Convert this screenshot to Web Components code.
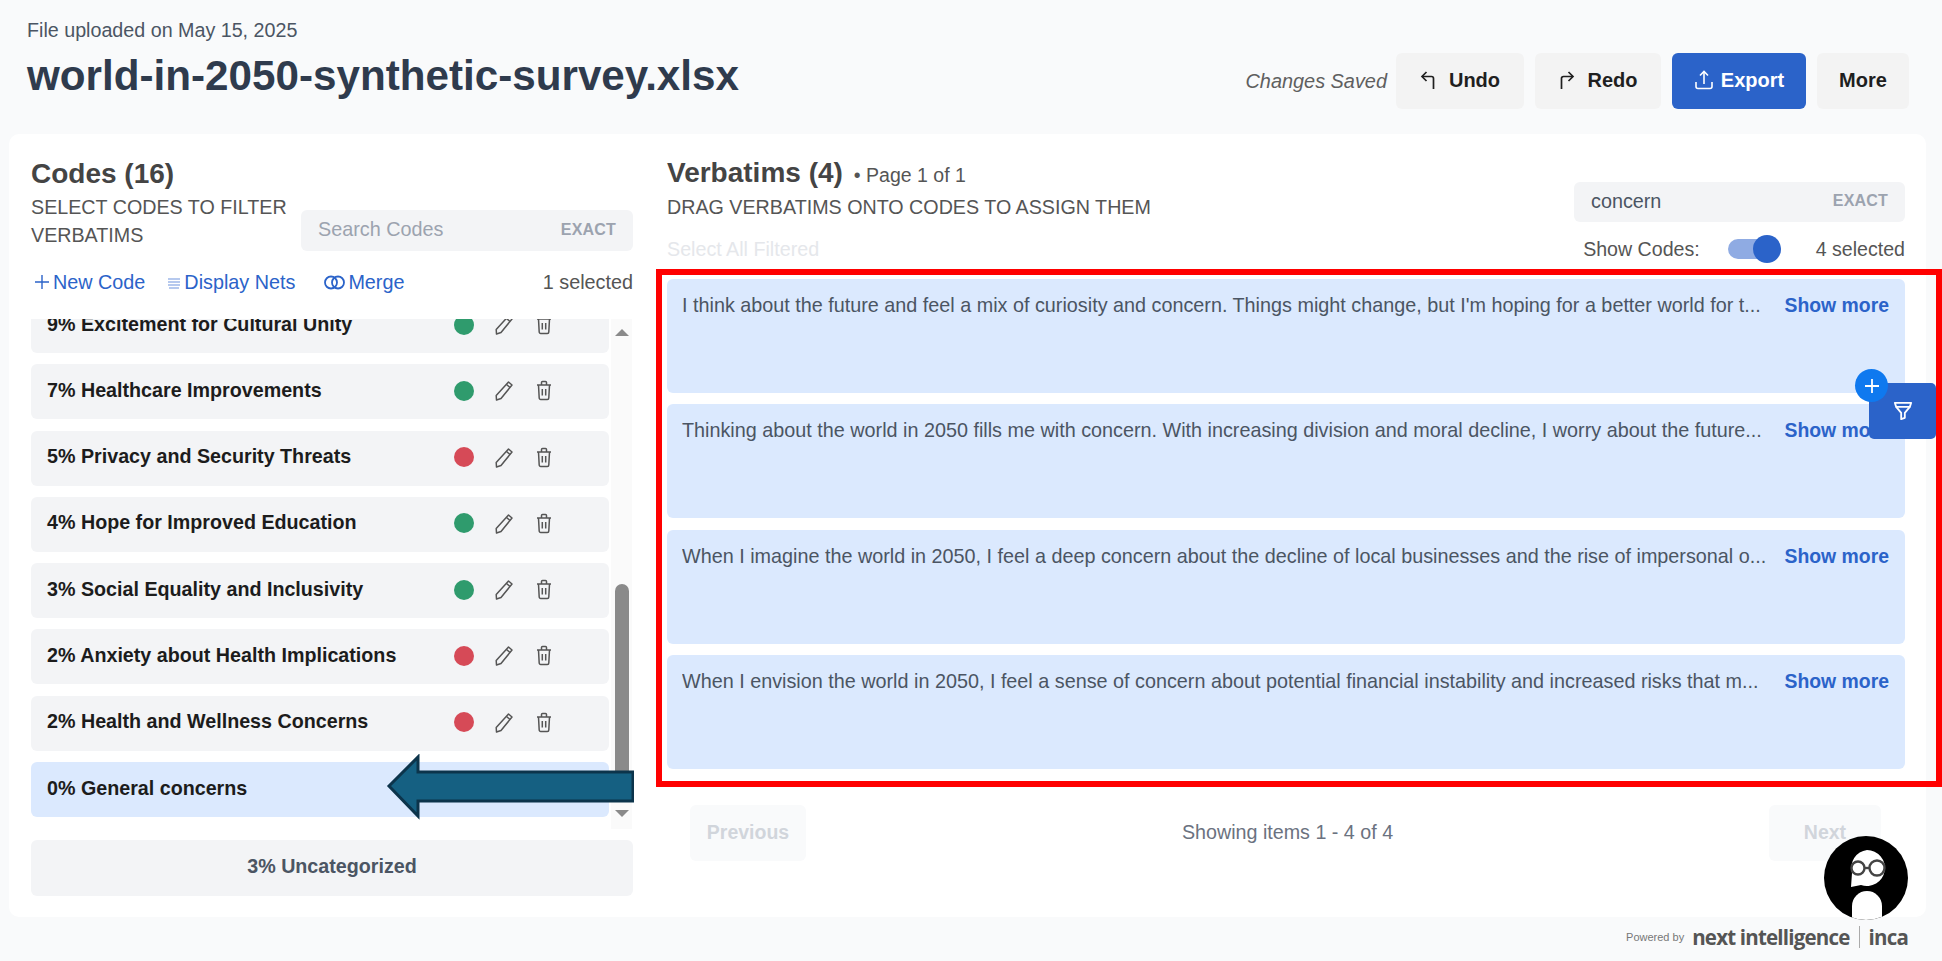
<!DOCTYPE html>
<html lang="en">
<head>
<meta charset="utf-8">
<title>world-in-2050-synthetic-survey.xlsx</title>
<style>
  html, body { margin: 0; height: 961px; overflow: hidden; background: #f9fafb; }
  body { font-family: "Liberation Sans", Arial, sans-serif; }
</style>
</head>
<body>
<coding-app></coding-app>

<script>
const ICONS = {
  undo: `<svg width="16" height="20" viewBox="0 0 16 20" fill="none" stroke="currentColor" stroke-width="1.7"><path d="M13.5 19V8.5a2 2 0 0 0-2-2H2.5"/><path d="M6.5 2 2 6.5 6.5 11"/></svg>`,
  redo: `<svg width="16" height="20" viewBox="0 0 16 20" fill="none" stroke="currentColor" stroke-width="1.7"><path d="M2.5 19V8.5a2 2 0 0 1 2-2h9"/><path d="M9.5 2 14 6.5 9.5 11"/></svg>`,
  upload: `<svg width="20" height="20" viewBox="0 0 20 20" fill="none" stroke="currentColor" stroke-width="1.6"><path d="M10 14V2"/><path d="M6 5.5 10 1.5l4 4"/><path d="M2 12v4.5a2 2 0 0 0 2 2h12a2 2 0 0 0 2-2V12"/></svg>`,
  pencil: `<svg width="20" height="21" viewBox="0 0 20 21" fill="none" stroke="#555" stroke-width="1.5" stroke-linejoin="round"><path d="M14.5 2 18 5 7 18.500 2.500 20 2.200 15.500Z"/><path d="M12.500 4.500 16 7.500"/></svg>`,
  trash: `<svg width="16" height="21" viewBox="0 0 16 21" fill="none" stroke="#555" stroke-width="1.5" stroke-linejoin="round"><path d="M1 5h14"/><path d="M5.500 5V2.500a1 1 0 0 1 1-1h3a1 1 0 0 1 1 1V5"/><path d="M2.500 5l.7 13a1.500 1.500 0 0 0 1.500 1.500h6.600a1.500 1.500 0 0 0 1.500-1.500l.7-13"/><path d="M6.300 9v6.500M9.700 9v6.500"/></svg>`,
  plus: `<svg width="14" height="14" viewBox="0 0 14 14" fill="none" stroke="currentColor" stroke-width="1.4"><path d="M7 0v14M0 7h14"/></svg>`,
  lines: `<svg width="14" height="14" viewBox="0 0 14 14" fill="none" stroke="#6f93dd" stroke-width="1.200"><path d="M1 4h12M1 7h12M1 10h12M2 13h10"/></svg>`,
  rings: `<svg width="24" height="16" viewBox="0 0 24 16" fill="none" stroke="currentColor" stroke-width="1.800"><circle cx="8" cy="8.500" r="6"/><circle cx="15" cy="8.500" r="6"/></svg>`,
  funnel: `<svg width="20" height="20" viewBox="0 0 22 22" fill="none" stroke="#fff" stroke-width="2" stroke-linejoin="round"><path d="M2 2h18l-1.500 4.500h-15Z"/><path d="M3.500 6.500 9 13v7l4-1.500V13l5.500-6.500"/></svg>`,
};

class CodingApp extends HTMLElement {
  constructor() {
    super();
    this.attachShadow({ mode: "open" });
  }

  connectedCallback() {
    this.shadowRoot.innerHTML = `
      <style>
        :host {
          display: flex;
          flex-direction: column;
          position: relative;
          width: 1942px;
          height: 961px;
          overflow: hidden;
          background: #f9fafb;
        }
        .panel {
          display: grid;
          grid-template-columns: 602px 1238px;
          column-gap: 34px;
          width: 1917px;
          height: 783px;
          box-sizing: border-box;
          margin-left: 9px;
          padding: 25px 21px 0 22px;
          background: #fff;
          border-radius: 10px;
        }
        /* annotation drawn on top of the screenshot */
        .redbox {
          position: absolute;
          left: 656px;
          top: 269px;
          width: 1286px;
          height: 518px;
          box-sizing: border-box;
          border: 6px solid #ff0000;
          pointer-events: none;
        }
        .arrow { position: absolute; left: 386px; top: 754px; }
        .filter {
          position: absolute;
          left: 1869px;
          top: 383px;
          width: 67px;
          height: 56px;
          display: flex;
          align-items: center;
          justify-content: center;
          background: #2b63c9;
          border-radius: 5px;
        }
        .fab {
          position: absolute;
          left: 1855px;
          top: 369px;
          width: 33px;
          height: 33px;
          border-radius: 50%;
          display: flex;
          align-items: center;
          justify-content: center;
          background: #0f79ef;
          color: #fff;
        }
        .avatar { position: absolute; left: 1824px; top: 836px; }
      </style>
      <page-header></page-header>
      <div class="panel">
        <codes-panel></codes-panel>
        <verbatims-panel></verbatims-panel>
      </div>
      <page-footer></page-footer>
      <div class="redbox"></div>
      <svg class="arrow" width="248" height="66" viewBox="0 0 248 66">
        <path d="M3 32 32 3V18H247V47H32V62Z" fill="#156082" stroke="#0c344b" stroke-width="3"/>
      </svg>
      <div class="filter">${ICONS.funnel}</div>
      <div class="fab"><svg width="16" height="16" viewBox="0 0 16 16" fill="none" stroke="#fff" stroke-width="1.8"><path d="M8 1v14M1 8h14"/></svg></div>
      <svg class="avatar" width="84" height="84" viewBox="0 0 84 84">
        <defs><clipPath id="c"><circle cx="42" cy="42" r="42"/></clipPath></defs>
        <circle cx="42" cy="42" r="42" fill="#000"/>
        <g clip-path="url(#c)">
          <path d="M43 14a18 18 0 1 1-6 35l-10 2 1-14a18 18 0 0 1 15-23Z" fill="#fff"/>
          <path d="M28 84V70a15 15 0 0 1 30 0v14Z" fill="#fff"/>
        </g>
        <g fill="none" stroke="#444" stroke-width="2.400">
          <circle cx="34" cy="32" r="6.500"/><circle cx="53" cy="32" r="7.500"/><path d="M40.500 32h5"/>
        </g>
      </svg>
    `;
  }
}

class PageHeader extends HTMLElement {
  constructor() {
    super();
    this.attachShadow({ mode: "open" });
  }

  connectedCallback() {
    this.shadowRoot.innerHTML = `
      <style>
        :host {
          display: flex;
          justify-content: space-between;
          height: 134px;
          box-sizing: border-box;
          padding: 17px 33px 0 27px;
          flex: none;
        }
        .uploaded { font-size: 19.700px; line-height: 26px; color: #4b5563; }
        h1 {
          margin: 8px 0 0;
          font-size: 42.200px;
          line-height: 50px;
          font-weight: 700;
          color: #2f3b4d;
        }
        .actions { display: flex; align-items: flex-start; padding-top: 36px; }
        .saved {
          font-style: italic;
          font-size: 19.900px;
          line-height: 56px;
          color: #5f5f5f;
          margin-right: 9px;
        }
        .btn {
          display: flex;
          align-items: center;
          justify-content: center;
          gap: 13px;
          height: 56px;
          margin-right: 11px;
          padding-bottom: 2px;
          box-sizing: border-box;
          font-size: 20px;
          font-weight: 700;
          color: #1f1f1f;
          background: #f3f3f3;
          border-radius: 6px;
        }
        .undo { width: 128px; }
        .redo { width: 126px; }
        .export { width: 134px; gap: 7px; background: #2b63c9; color: #fff; }
        .more { width: 92px; margin-right: 0; }
      </style>
      <div>
        <div class="uploaded">File uploaded on May 15, 2025</div>
        <h1>world-in-2050-synthetic-survey.xlsx</h1>
      </div>
      <div class="actions">
        <span class="saved">Changes Saved</span>
        <div class="btn undo">${ICONS.undo}<span>Undo</span></div>
        <div class="btn redo">${ICONS.redo}<span>Redo</span></div>
        <div class="btn export">${ICONS.upload}<span>Export</span></div>
        <div class="btn more">More</div>
      </div>
    `;
  }
}

class SearchBox extends HTMLElement {
  constructor() {
    super();
    this.attachShadow({ mode: "open" });
  }

  connectedCallback() {
    const value = this.getAttribute("value");
    const placeholder = this.getAttribute("placeholder");
    this.shadowRoot.innerHTML = `
      <style>
        :host {
          display: flex;
          align-items: center;
          justify-content: space-between;
          box-sizing: border-box;
          background: #f3f4f6;
          border-radius: 6px;
          padding: 0 17px 2px 17px;
          font-size: 19.800px;
        }
        .value { color: #4b5563; }
        .placeholder { color: #9ca3af; }
        .exact { font-size: 16px; font-weight: 700; color: #9ca3af; letter-spacing: .2px; }
      </style>
      <span class="${value ? "value" : "placeholder"}">${value || placeholder}</span>
      <span class="exact">EXACT</span>
    `;
  }
}

class CodeRow extends HTMLElement {
  constructor() {
    super();
    this.attachShadow({ mode: "open" });
  }

  connectedCallback() {
    const tone = this.getAttribute("tone");
    const controls = tone
      ? `<span class="dot ${tone}"></span><span class="pencil">${ICONS.pencil}</span><span class="trash">${ICONS.trash}</span>`
      : "";
    this.shadowRoot.innerHTML = `
      <style>
        :host {
          display: flex;
          align-items: center;
          flex: none;
          height: 55px;
          box-sizing: border-box;
          padding: 0 57px 3px 16px;
          background: #f3f4f6;
          border-radius: 6px;
          font-size: 19.700px;
          font-weight: 700;
          color: #1c1c1c;
        }
        :host([active]) { background: #dbe9fe; padding-bottom: 2px; }
        .label { flex: 1; white-space: nowrap; }
        .dot { width: 20px; height: 20px; border-radius: 50%; margin-top: 1px; }
        .good { background: #2f9b6d; }
        .bad { background: #d64a57; }
        .pencil { display: flex; margin: 1px 0 0 20px; }
        .trash { display: flex; margin: 1px 0 0 22px; }
      </style>
      <span class="label"><slot></slot></span>
      ${controls}
    `;
  }
}

class CodesPanel extends HTMLElement {
  constructor() {
    super();
    this.attachShadow({ mode: "open" });
  }

  connectedCallback() {
    this.shadowRoot.innerHTML = `
      <style>
        :host { display: block; }
        h2 { margin: 1px 0 0; font-size: 28px; line-height: 28px; font-weight: 700; color: #444; }
        .intro { display: flex; justify-content: space-between; align-items: flex-end; margin-top: 5px; }
        .hint { width: 270px; font-size: 19.700px; line-height: 28px; color: #555; }
        search-box { width: 332px; height: 41px; margin-bottom: -2px; }
        .tools {
          display: flex;
          align-items: center;
          height: 28px;
          margin-top: 19px;
          font-size: 19.800px;
          color: #2b63c9;
        }
        .tool { display: flex; align-items: center; gap: 4px; padding-left: 4px; }
        .tool + .tool { margin-left: 18px; }
        .tool.nets { gap: 3px; }
        .tool.merge { margin-left: 24px; gap: 1px; }
        .count { margin-left: auto; color: #555; }
        .list-wrap { display: flex; height: 510px; margin-top: 23px; overflow: hidden; }
        .list {
          display: flex;
          flex-direction: column;
          gap: 11.300px;
          width: 578px;
          margin-top: -21px;
          flex: none;
        }
        .bar {
          display: flex;
          flex-direction: column;
          align-items: center;
          width: 21px;
          margin-left: 2px;
          background: #fafafa;
        }
        .up, .down { width: 0; height: 0; border-left: 7px solid transparent; border-right: 7px solid transparent; }
        .up { margin-top: 10px; border-bottom: 7px solid #8a8a8a; }
        .down { margin-top: 36px; border-top: 7px solid #8a8a8a; }
        .thumb { width: 14px; height: 190px; margin-top: 248px; background: #8a8a8a; border-radius: 7px 7px 0 0; }
        .uncat {
          display: flex;
          align-items: center;
          justify-content: center;
          height: 56px;
          box-sizing: border-box;
          padding-bottom: 3px;
          margin-top: 11px;
          background: #f3f4f6;
          border-radius: 6px;
          font-size: 19.700px;
          font-weight: 700;
          color: #4b5563;
        }
      </style>
      <h2>Codes (16)</h2>
      <div class="intro">
        <div class="hint">SELECT CODES TO FILTER VERBATIMS</div>
        <search-box placeholder="Search Codes"></search-box>
      </div>
      <div class="tools">
        <span class="tool">${ICONS.plus}<span>New Code</span></span>
        <span class="tool nets">${ICONS.lines}<span>Display Nets</span></span>
        <span class="tool merge">${ICONS.rings}<span>Merge</span></span>
        <span class="count">1 selected</span>
      </div>
      <div class="list-wrap">
        <div class="list">
          <code-row tone="good">9% Excitement for Cultural Unity</code-row>
          <code-row tone="good">7% Healthcare Improvements</code-row>
          <code-row tone="bad">5% Privacy and Security Threats</code-row>
          <code-row tone="good">4% Hope for Improved Education</code-row>
          <code-row tone="good">3% Social Equality and Inclusivity</code-row>
          <code-row tone="bad">2% Anxiety about Health Implications</code-row>
          <code-row tone="bad">2% Health and Wellness Concerns</code-row>
          <code-row active>0% General concerns</code-row>
        </div>
        <div class="bar">
          <span class="up"></span>
          <span class="thumb"></span>
          <span class="down"></span>
        </div>
      </div>
      <div class="uncat">3% Uncategorized</div>
    `;
  }
}

class VerbatimCard extends HTMLElement {
  constructor() {
    super();
    this.attachShadow({ mode: "open" });
  }

  connectedCallback() {
    this.shadowRoot.innerHTML = `
      <style>
        :host {
          display: flex;
          justify-content: space-between;
          height: 114px;
          box-sizing: border-box;
          padding: 12px 16px 0 15px;
          background: #dbe9fe;
          border-radius: 6px;
          font-size: 19.800px;
          line-height: 28px;
          color: #4b5563;
        }
        .text { white-space: nowrap; overflow: hidden; width: 1085px; }
        .more { font-weight: 700; font-size: 19.400px; color: #2b63c9; white-space: nowrap; }
      </style>
      <div class="text"><slot></slot></div>
      <span class="more">Show more</span>
    `;
  }
}

class VerbatimsPanel extends HTMLElement {
  constructor() {
    super();
    this.attachShadow({ mode: "open" });
  }

  connectedCallback() {
    this.shadowRoot.innerHTML = `
      <style>
        :host { display: block; }
        .top { display: flex; justify-content: space-between; height: 104px; }
        h2 { display: inline; margin: 0; font-size: 28px; line-height: 28px; font-weight: 700; color: #444; }
        .page { margin-left: 11px; font-size: 19.500px; color: #555; }
        .title { height: 28px; line-height: 28px; }
        .hint { margin-top: 6px; font-size: 19.700px; line-height: 28px; color: #555; }
        .all { margin-top: 14px; font-size: 19.700px; line-height: 28px; color: #e5e7eb; }
        .side { display: flex; flex-direction: column; align-items: flex-end; padding-top: 23px; }
        search-box { width: 331px; height: 40px; }
        .show { display: flex; align-items: center; height: 28px; margin-top: 13px; font-size: 19.600px; color: #555; }
        .toggle { position: relative; width: 53px; height: 20px; margin: 0 35px 0 28px; background: #8fabe3; border-radius: 10px; }
        .knob { position: absolute; right: 0; top: -4px; width: 28px; height: 28px; border-radius: 50%; background: #2b63c9; }
        .cards { display: flex; flex-direction: column; gap: 11.300px; margin-top: 16px; }
        .pager {
          display: flex;
          align-items: center;
          justify-content: space-between;
          margin-top: 36px;
          padding: 0 24px 0 23px;
          font-size: 19.700px;
          color: #6b7280;
        }
        .pg {
          display: flex;
          align-items: center;
          justify-content: center;
          height: 56px;
          background: #f9fafb;
          border-radius: 6px;
          font-weight: 700;
          font-size: 19.500px;
          color: #d1d5db;
        }
        .prev { width: 116px; }
        .next { width: 112px; }
      </style>
      <div class="top">
        <div>
          <div class="title"><h2>Verbatims (4)</h2><span class="page">&bull; Page 1 of 1</span></div>
          <div class="hint">DRAG VERBATIMS ONTO CODES TO ASSIGN THEM</div>
          <div class="all">Select All Filtered</div>
        </div>
        <div class="side">
          <search-box value="concern"></search-box>
          <div class="show">
            <span>Show Codes:</span>
            <span class="toggle"><span class="knob"></span></span>
            <span>4 selected</span>
          </div>
        </div>
      </div>
      <div class="cards">
        <verbatim-card>I think about the future and feel a mix of curiosity and concern. Things might change, but I'm hoping for a better world for t...</verbatim-card>
        <verbatim-card>Thinking about the world in 2050 fills me with concern. With increasing division and moral decline, I worry about the future...</verbatim-card>
        <verbatim-card>When I imagine the world in 2050, I feel a deep concern about the decline of local businesses and the rise of impersonal o...</verbatim-card>
        <verbatim-card>When I envision the world in 2050, I feel a sense of concern about potential financial instability and increased risks that m...</verbatim-card>
      </div>
      <div class="pager">
        <div class="pg prev">Previous</div>
        <span>Showing items 1 - 4 of 4</span>
        <div class="pg next">Next</div>
      </div>
    `;
  }
}

class PageFooter extends HTMLElement {
  constructor() {
    super();
    this.attachShadow({ mode: "open" });
  }

  connectedCallback() {
    this.shadowRoot.innerHTML = `
      <style>
        :host {
          display: flex;
          align-items: center;
          justify-content: flex-end;
          height: 40px;
          padding-right: 34px;
          color: #555;
        }
        .by { font-size: 11px; margin-right: 8px; color: #777; }
        .brand { font-family: "Open Sans", sans-serif; font-size: 20.500px; font-weight: 700; letter-spacing: -.8px; }
        .sep { width: 1px; height: 22px; margin: 0 9px; background: #aaa; }
      </style>
      <span class="by">Powered by</span>
      <span class="brand">next intelligence</span>
      <span class="sep"></span>
      <span class="brand">inca</span>
    `;
  }
}

customElements.define("search-box", SearchBox);
customElements.define("code-row", CodeRow);
customElements.define("verbatim-card", VerbatimCard);
customElements.define("codes-panel", CodesPanel);
customElements.define("verbatims-panel", VerbatimsPanel);
customElements.define("page-header", PageHeader);
customElements.define("page-footer", PageFooter);
customElements.define("coding-app", CodingApp);
</script>
</body>
</html>
